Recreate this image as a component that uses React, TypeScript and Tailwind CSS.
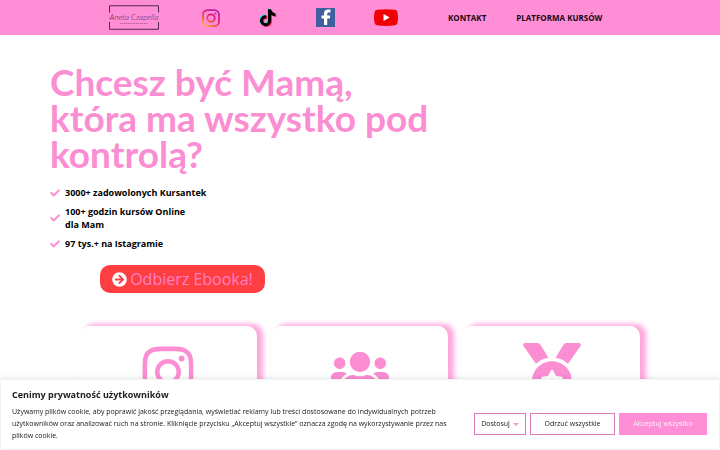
import React from 'react';
import { FaArrowCircleRight, FaCheck, FaInstagram, FaMedal, FaUsers } from 'react-icons/fa';

const Logo: React.FC = () => (
  <svg viewBox="0 0 100 50" className="w-[50px] h-[25px] overflow-visible" role="img" aria-label="Aneta Czapella">
    <path d="M1 15V1.500H99V15M1 34V48.500H99V34" fill="none" stroke="#54254a" strokeWidth="2" />
    <text
      x="50"
      y="29"
      textAnchor="middle"
      className="font-['Lato',cursive] italic font-light text-[16px]"
      fill="#54254a"
    >
      Aneta Czapella
    </text>
    <path d="M22 37H78" stroke="#c060a4" strokeWidth="2" strokeDasharray="3 1" />
  </svg>
);

const InstagramLogo: React.FC = () => (
  <svg viewBox="0 0 36 36" className="size-[18px]" fill="none">
    <defs>
      <linearGradient id="ig" x1="4" y1="36" x2="30" y2="0" gradientUnits="userSpaceOnUse">
        <stop offset="0" stopColor="#ffc94a" />
        <stop offset="0.3" stopColor="#fb5b32" />
        <stop offset="0.6" stopColor="#e01878" />
        <stop offset="1" stopColor="#b321b8" />
      </linearGradient>
    </defs>
    <rect x="2" y="2" width="32" height="32" rx="9" stroke="url(#ig)" strokeWidth="3.500" />
    <circle cx="18" cy="18" r="7.500" stroke="url(#ig)" strokeWidth="3.500" />
    <circle cx="27" cy="9" r="2.200" fill="#c81d9c" />
  </svg>
);

const noteShape =
  'M23 2h-6v23a5 5 0 1 1-5-5c.5 0 1 .1 1.500.2v-6.200a11 11 0 1 0 9.500 11V13c2.500 1.800 5.500 2.800 8.500 2.800V9.800C27 9.500 23.500 6.500 23 2z';

const TikTokLogo: React.FC = () => (
  <svg viewBox="0 0 36 40" className="w-[18px] h-[20px]">
    <path d={noteShape} fill="#25e5e5" transform="translate(-1 -1)" />
    <path d={noteShape} fill="#f5205a" transform="translate(3 2)" />
    <path d={noteShape} fill="#000" transform="translate(1 .5)" />
  </svg>
);

const FacebookLogo: React.FC = () => (
  <svg viewBox="0 0 38 38" className="size-[19px]">
    <rect width="38" height="38" fill="#3f5f9f" />
    <path d="M16 34V21h-5v-6h5v-4c0-5 3-8 8-8h5v6h-3c-2.500 0-3.500 1-3.500 3v3h6l-1 6h-5v13z" fill="#fff" />
  </svg>
);

const YoutubeLogo: React.FC = () => (
  <svg viewBox="0 0 48 34" className="w-[24px] h-[17px]">
    <path
      d="M6 1.500Q24-1 42 1.500Q46 2 47 7Q49 17 47 27Q46 32 42 32.500Q24 35 6 32.500Q2 32 1 27Q-1 17 1 7Q2 2 6 1.500z"
      fill="#f00000"
    />
    <path d="M19 10v14l12.500-7z" fill="#fff" />
  </svg>
);

const socials = [
  { name: 'Instagram', Icon: InstagramLogo },
  { name: 'TikTok', Icon: TikTokLogo },
  { name: 'Facebook', Icon: FacebookLogo },
  { name: 'YouTube', Icon: YoutubeLogo },
];

const benefits: React.ReactNode[] = [
  '3000+ zadowolonych Kursantek',
  <>
    100+ godzin kursów Online
    <br />
    dla Mam
  </>,
  '97 tys.+ na Istagramie',
];

const cards = [FaInstagram, FaUsers, FaMedal];

const Header: React.FC = () => (
  <header className="flex items-center h-[35px] pl-[109px] bg-[#ff8ed6]">
    <a href="#start">
      <Logo />
    </a>
    <div className="flex items-center gap-[39px] ml-[43px]">
      {socials.map(({ name, Icon }) => (
        <a key={name} href={`#${name}`} aria-label={name}>
          <Icon />
        </a>
      ))}
    </div>
    <nav className="flex gap-[30px] ml-[50px] text-[8px] font-bold text-[#1a0613] whitespace-nowrap">
      <a href="#kontakt">KONTAKT</a>
      <a href="#kursy">PLATFORMA KURSÓW</a>
    </nav>
  </header>
);

const CookieBanner: React.FC = () => (
  <section
    aria-label="Cookies"
    className="fixed inset-x-0 bottom-0 pt-[9px] pb-[7px] pl-[11px] pr-3 bg-white border border-[#f4f4f4] shadow-[0_-1px_5px_#0000001a]"
  >
    <h2 className="text-[9px] leading-[12px] font-bold text-[#212121]">Cenimy prywatność użytkowników</h2>
    <div className="flex items-center justify-between mt-[5px]">
      <p className="w-[440px] text-[7px] leading-[12px] text-[#212121]">
        Używamy plików cookie, aby poprawić jakość przeglądania, wyświetlać reklamy lub treści dostosowane do
        indywidualnych potrzeb użytkowników oraz analizować ruch na stronie. Kliknięcie przycisku „Akceptuj
        wszystkie” oznacza zgodę na wykorzystywanie przez nas plików cookie.
      </p>
      <div className="flex gap-[4px] h-[22px] text-[7px] whitespace-nowrap">
        <button className="flex items-center justify-center gap-[3px] w-[52px] border border-[#e07cbb] text-[#212121]">
          Dostosuj
          <span className="border-x-[3px] border-x-transparent border-t-[3px] border-t-[#e8a0cb]" />
        </button>
        <button className="w-[85px] border border-[#e07cbb] text-[#212121]">Odrzuć wszystkie</button>
        <button className="w-[88px] bg-[#ff8ed6] text-[#fff0fa]">Akceptuj wszystko</button>
      </div>
    </div>
  </section>
);

const App: React.FC = () => {
  return (
    <div className="min-h-screen bg-white font-['Open_Sans',sans-serif]">
      <Header />
      <main>
        <section className="flex flex-col items-start pt-[29px] pl-[50px]">
          <h1 className="font-['Lato',sans-serif] font-bold text-[37px] leading-[36px] text-[#fb8ed3]">
            Chcesz być Mamą,
            <br />
            która ma wszystko pod
            <br />
            kontrolą?
          </h1>
          <ul className="flex flex-col gap-[6px] mt-[14px] text-[9px] leading-[13px] font-bold text-black">
            {benefits.map((text, i) => (
              <li key={i} className="flex items-center gap-[5px]">
                <FaCheck className="size-[10px] text-[#fb8ed3]" />
                <span>{text}</span>
              </li>
            ))}
          </ul>
          <a
            href="#ebook"
            className="flex items-center justify-center gap-[3px] w-[165px] h-[28px] ml-[50px] mt-[15px] rounded-[10px] bg-[#ff3e41] text-[16px] text-[#ff80c4] whitespace-nowrap"
          >
            <FaArrowCircleRight className="size-[15px] text-white" />
            Odbierz Ebooka!
          </a>
        </section>
        <section className="grid grid-cols-3 gap-[15px] mt-[33px] px-20">
          {cards.map((Icon, i) => (
            <div
              key={i}
              className="flex justify-center pt-[17px] pb-5 rounded-[10px] bg-white shadow-[5px_-1px_5px_1px_#ffa6de]"
            >
              <Icon className="size-[58px] text-[#fb8ed3]" />
            </div>
          ))}
        </section>
      </main>
      <CookieBanner />
    </div>
  );
};

export default App;
